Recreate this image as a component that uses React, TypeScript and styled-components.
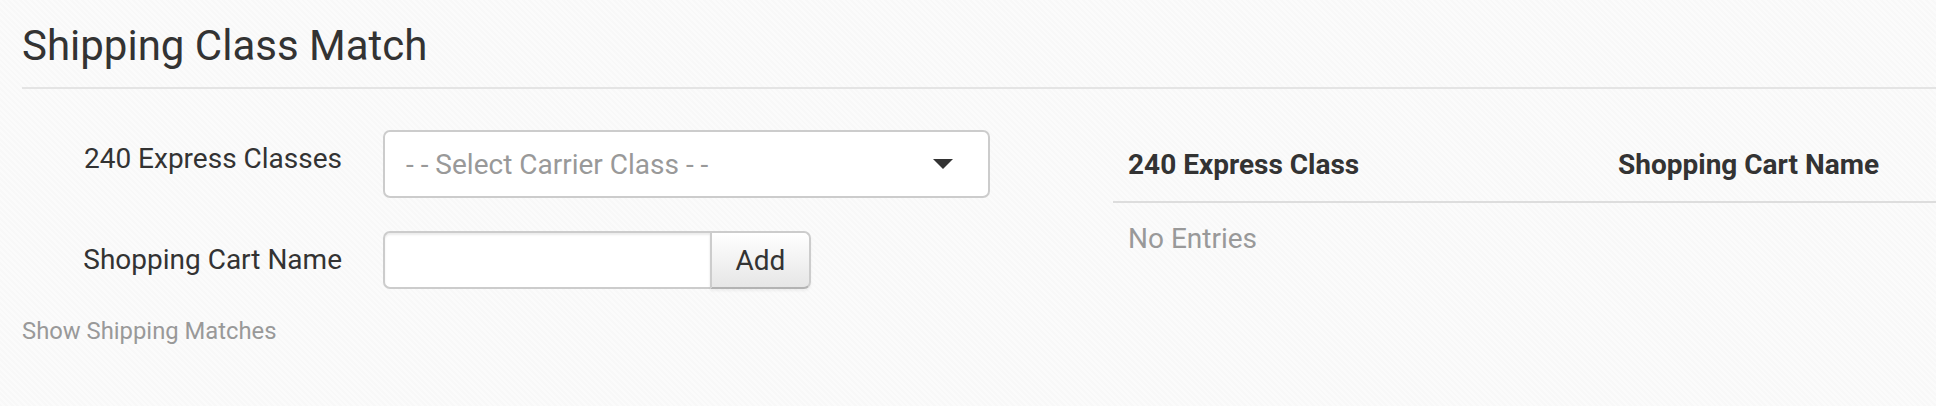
import React from 'react';
import styled, { createGlobalStyle } from 'styled-components';

const GlobalStyle = createGlobalStyle`
  html, body {
    margin: 0;
    padding: 0;
  }
  body {
    min-height: 406px;
    font-family: Roboto, "Helvetica Neue", Arial, sans-serif;
    color: #333;
    background-color: #fbfbfb;
    background-image: repeating-linear-gradient(
      45deg,
      rgba(0, 0, 0, 0.01) 0 2px,
      transparent 2px 4px
    );
  }
`;

const Page = styled.div`
  padding: 21px 0 0 22px;
`;

const Title = styled.h1`
  margin: 0;
  padding-bottom: 17px;
  font-size: 42px;
  font-weight: 400;
  line-height: 49px;
  color: #333;
  border-bottom: 2px solid #e4e4e4;
`;

const Content = styled.div`
  display: grid;
  grid-template-columns: 1091px 1fr;
  align-items: start;
  margin-top: 41px;
`;

const Form = styled.div`
  display: flex;
  flex-direction: column;
`;

const FormRow = styled.div`
  display: grid;
  grid-template-columns: 320px auto;
  column-gap: 41px;
  align-items: start;

  & + & {
    margin-top: 33px;
  }
`;

const Label = styled.label<{ $top: number }>`
  padding-top: ${(p) => p.$top}px;
  font-size: 28px;
  line-height: 40px;
  text-align: right;
  color: #333;
`;

const SelectBox = styled.div`
  display: flex;
  align-items: center;
  justify-content: space-between;
  box-sizing: border-box;
  width: 607px;
  height: 68px;
  padding: 0 35px 0 21px;
  background: #fff;
  border: 2px solid #ccc;
  border-radius: 7px;
  font-size: 28px;
  color: #999;
  cursor: pointer;
`;

const InputGroup = styled.div`
  display: flex;
  height: 58px;
`;

const TextInput = styled.input`
  box-sizing: border-box;
  width: 327px;
  height: 58px;
  margin: 0;
  padding: 0 14px;
  background: #fff;
  border: 2px solid #ccc;
  border-right: none;
  border-radius: 7px 0 0 7px;
  box-shadow: inset 0 2px 2px rgba(0, 0, 0, 0.075);
  font-family: inherit;
  font-size: 28px;
  color: #555;
  outline: none;
`;

const AddButton = styled.button`
  box-sizing: border-box;
  width: 101px;
  height: 58px;
  margin: 0;
  padding: 0;
  background: linear-gradient(#ffffff, #e6e6e6);
  border: 2px solid #ccc;
  border-bottom-color: #b3b3b3;
  border-radius: 0 7px 7px 0;
  box-shadow: inset 0 2px 0 rgba(255, 255, 255, 0.2), 0 2px 3px rgba(0, 0, 0, 0.05);
  font-family: inherit;
  font-size: 28px;
  color: #333;
  cursor: pointer;
`;

const ShowLink = styled.a`
  display: block;
  margin-top: 25px;
  font-size: 23.8px;
  line-height: 34px;
  color: #999;
  text-decoration: none;
  cursor: pointer;
`;

const Table = styled.table`
  width: 100%;
  margin-top: 1px;
  border-collapse: collapse;
  table-layout: fixed;
`;

const Th = styled.th<{ $width?: number }>`
  box-sizing: border-box;
  width: ${(p) => (p.$width ? `${p.$width}px` : 'auto')};
  padding: 14px 15px 16px;
  font-size: 28px;
  font-weight: 700;
  line-height: 40px;
  text-align: left;
  color: #333;
  border-bottom: 2px solid #ddd;
`;

const EmptyCell = styled.td`
  padding: 16px 15px 12px;
  font-size: 28px;
  line-height: 40px;
  color: #999;
`;

const CaretDown = () => (
  <svg width="20" height="10" viewBox="0 0 20 10" aria-hidden="true">
    <polygon points="0,0 20,0 10,10" fill="#333" />
  </svg>
);

const App: React.FC = () => {
  return (
    <>
      <GlobalStyle />
      <Page>
        <Title>Shipping Class Match</Title>
        <Content>
          <Form>
            <FormRow>
              <Label $top={9}>240 Express Classes</Label>
              <SelectBox>
                <span>- - Select Carrier Class - -</span>
                <CaretDown />
              </SelectBox>
            </FormRow>
            <FormRow>
              <Label $top={9}>Shopping Cart Name</Label>
              <InputGroup>
                <TextInput type="text" />
                <AddButton type="button">Add</AddButton>
              </InputGroup>
            </FormRow>
            <ShowLink>Show Shipping Matches</ShowLink>
          </Form>

          <Table>
            <thead>
              <tr>
                <Th $width={490}>240 Express Class</Th>
                <Th>Shopping Cart Name</Th>
              </tr>
            </thead>
            <tbody>
              <tr>
                <EmptyCell colSpan={2}>No Entries</EmptyCell>
              </tr>
            </tbody>
          </Table>
        </Content>
      </Page>
    </>
  );
};

export default App;
